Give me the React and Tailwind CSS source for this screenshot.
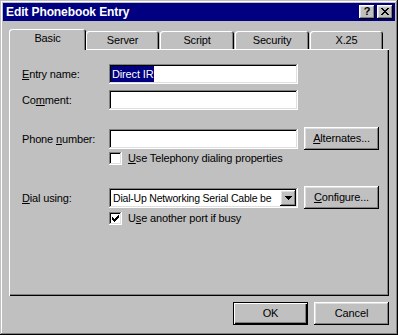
import React from 'react'

const raised = 'shadow-[inset_-1px_-1px_#000,inset_1px_1px_#fff,inset_-2px_-2px_#808080,inset_2px_2px_#dfdfdf]'
const sunken = 'shadow-[inset_-1px_-1px_#fff,inset_1px_1px_#808080,inset_-2px_-2px_#dfdfdf,inset_2px_2px_#000]'

function Button({ children, isDefault, className = '' }) {
  if (isDefault) {
    return (
      <div className={`w-[75px] h-[23px] border border-black bg-[#c0c0c0] shadow-[inset_1px_1px_#fff,inset_-1px_-1px_#000,inset_-2px_-2px_#808080] flex items-center justify-center ${className}`}>
        {children}
      </div>
    )
  }
  return (
    <div className={`w-[75px] h-[23px] bg-[#c0c0c0] ${raised} flex items-center justify-center ${className}`}>
      {children}
    </div>
  )
}

function Field({ children }) {
  return (
    <div className={`w-[189px] h-[20px] bg-white ${sunken} p-[2px] flex`}>
      {children}
    </div>
  )
}

function Checkbox({ checked, children }) {
  return (
    <div className="flex items-center h-[13px]">
      <div className={`w-[13px] h-[13px] bg-white ${sunken} flex items-center justify-center`}>
        {checked && (
          <svg width="7" height="7" viewBox="0 0 7 7" shapeRendering="crispEdges">
            <path d="M0 2h1v1h1v1h1v-1h1v-1h1v-1h1v-1h1v3h-1v1h-1v1h-1v1h-1v1h-1v-1h-1v-1h-1z" fill="#000" />
          </svg>
        )}
      </div>
      <span className="ml-[6px]">{children}</span>
    </div>
  )
}

function Tab({ label, width, active }) {
  if (active) {
    return (
      <div
        className="relative z-10 mb-[-1px] h-[21px] bg-[#c0c0c0] rounded-t-[3px] shadow-[inset_1px_1px_#fff,inset_-1px_0_#000,inset_-2px_0_#808080] flex items-center justify-center pb-[2px]"
        style={{ width }}
      >
        {label}
      </div>
    )
  }
  return (
    <div
      className="h-[18px] bg-[#c0c0c0] rounded-t-[3px] shadow-[inset_1px_1px_#fff,inset_-1px_0_#000,inset_-2px_0_#808080] flex items-center justify-center pt-[1px]"
      style={{ width }}
    >
      {label}
    </div>
  )
}

export default function App() {
  return (
    <div className="w-[398px] h-[335px] bg-[#c0c0c0] p-[3px] shadow-[inset_-1px_-1px_#000,inset_1px_1px_#c0c0c0,inset_-2px_-2px_#808080,inset_2px_2px_#fff] font-['Liberation_Sans',Arial,sans-serif] text-[11px] tracking-[-0.15px] leading-none text-black select-none flex flex-col">
      {/* title bar */}
      <div className="h-[18px] bg-[#000080] flex items-center justify-between pl-[3px] pr-[2px]">
        <span className="text-white font-bold text-[12px] tracking-[-0.1px]">Edit Phonebook Entry</span>
        <div className="flex gap-[2px]">
          <div className={`w-[16px] h-[14px] bg-[#c0c0c0] ${raised} flex items-center justify-center font-bold text-[11px] pb-[1px]`}>?</div>
          <div className={`w-[16px] h-[14px] bg-[#c0c0c0] ${raised} flex items-center justify-center pb-[1px]`}>
            <svg width="8" height="7" viewBox="0 0 8 7" shapeRendering="crispEdges">
              <path d="M0 0h2v1h1v1h2v-1h1v-1h2v1h-1v1h-1v1h-1v1h1v1h1v1h1v1h-2v-1h-1v-1h-2v1h-1v1h-2v-1h1v-1h1v-1h1v-1h-1v-1h-1v-1h-1z" fill="#000" />
            </svg>
          </div>
        </div>
      </div>

      <div className="flex-1 flex flex-col px-[6px] pt-[8px]">
        {/* tabs */}
        <div className="h-[20px] flex items-end">
          <Tab label="Basic" width={77} active />
          <Tab label="Server" width={73} />
          <div className="w-[1px]" />
          <Tab label="Script" width={74} />
          <div className="w-[1px]" />
          <Tab label="Security" width={74} />
          <div className="w-[1px]" />
          <Tab label="X.25" width={73} />
        </div>

        {/* panel */}
        <div className="h-[247px] w-[380px] shadow-[inset_1px_1px_#fff,inset_-1px_-1px_#000,inset_-2px_-2px_#808080] pl-[13px] pt-[15px] flex flex-col">
          <div className="h-[20px] flex items-center">
            <span className="w-[87px]"><u>E</u>ntry name:</span>
            <Field>
              <span className="bg-[#000080] text-white px-[1px] flex items-center">Direct IR</span>
            </Field>
          </div>

          <div className="h-[20px] mt-[6px] flex items-center">
            <span className="w-[87px]">Co<u>m</u>ment:</span>
            <Field />
          </div>

          <div className="h-[23px] mt-[17px] flex items-start">
            <span className="w-[87px] mt-[7px]">Phone <u>n</u>umber:</span>
            <div className="mt-[2px]">
              <Field />
            </div>
            <Button className="ml-[6px]"><u>A</u>lternates...</Button>
          </div>

          <div className="mt-[2px] pl-[87px]">
            <Checkbox><u>U</u>se Telephony dialing properties</Checkbox>
          </div>

          <div className="h-[23px] mt-[21px] flex items-start">
            <span className="w-[87px] mt-[7px]"><u>D</u>ial using:</span>
            <div className="mt-[2px]">
              <Field>
                <span className="flex-1 min-w-0 whitespace-nowrap flex items-center pl-[2px] text-[10.5px] tracking-[-0.2px]">Dial-Up Networking Serial Cable be</span>
                <div className={`w-[16px] h-[16px] shrink-0 bg-[#c0c0c0] ${raised} flex items-center justify-center`}>
                  <svg width="7" height="4" viewBox="0 0 7 4" shapeRendering="crispEdges">
                    <path d="M0 0h7v1h-1v1h-1v1h-1v1h-1v-1h-1v-1h-1v-1h-1z" fill="#000" />
                  </svg>
                </div>
              </Field>
            </div>
            <Button className="ml-[6px]"><u>C</u>onfigure...</Button>
          </div>

          <div className="mt-[3px] pl-[87px]">
            <Checkbox checked>U<u>s</u>e another port if busy</Checkbox>
          </div>
        </div>

        {/* footer */}
        <div className="flex justify-end gap-[6px] mt-[6px]">
          <Button isDefault>OK</Button>
          <Button>Cancel</Button>
        </div>
      </div>
    </div>
  )
}
